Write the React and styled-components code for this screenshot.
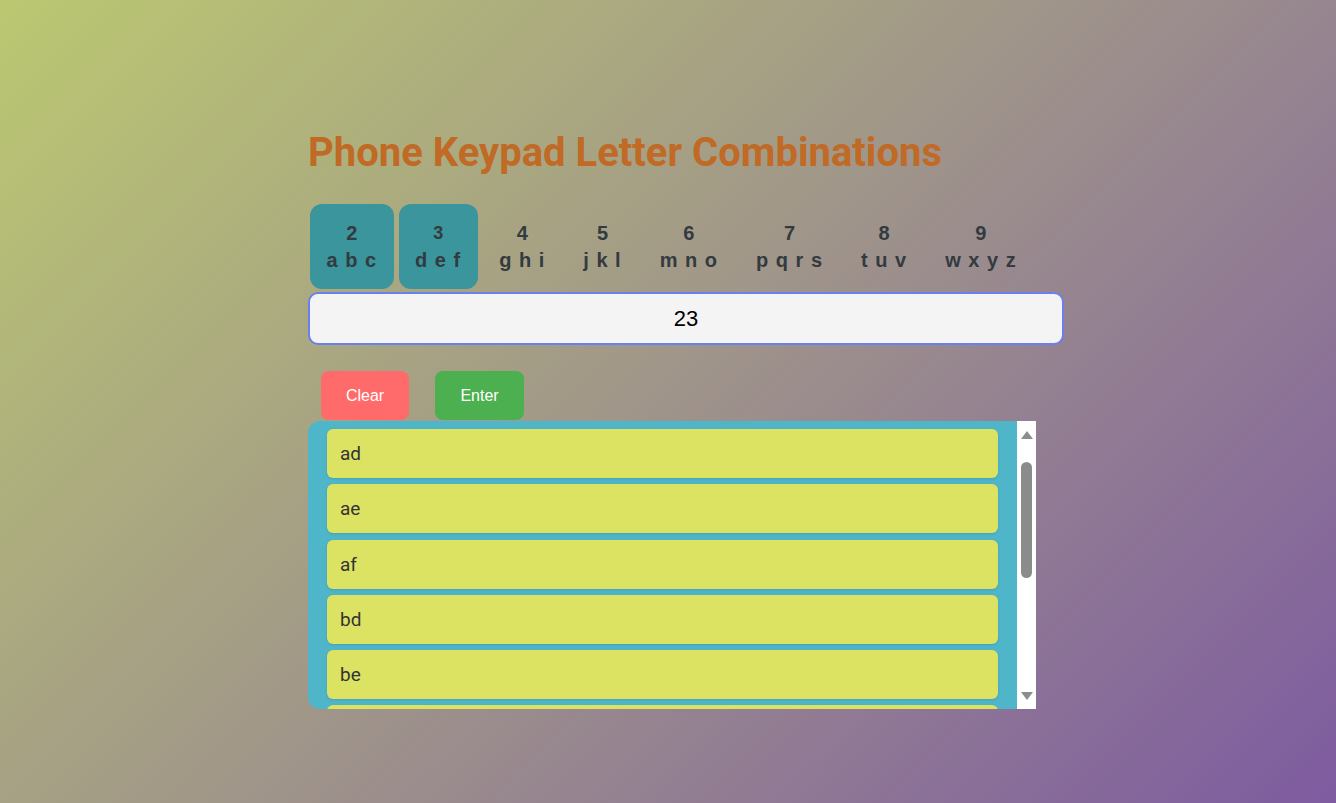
import React from "react";
import styled, { createGlobalStyle } from "styled-components";

const Global = createGlobalStyle`
  html, body { margin: 0; padding: 0; }
  body {
    min-height: 100vh;
    background: linear-gradient(135deg, #bbc871 0%, #9f948a 50%, #7e5ba0 100%);
    font-family: "Liberation Sans", Arial, sans-serif;
  }
`;

const Page = styled.div`
  min-height: 803px;
  display: flex;
  justify-content: center;
  box-sizing: border-box;
  padding-top: 126px;
`;

const Container = styled.div`
  width: 720px;
  display: flex;
  flex-direction: column;
  align-items: flex-start;
`;

const Title = styled.h1`
  margin: 0 0 24px 0;
  font-family: Roboto, "Noto Sans", sans-serif;
  font-weight: 700;
  font-size: 40px;
  line-height: 54px;
  color: #c06a25;
  white-space: nowrap;
`;

const Keypad = styled.div`
  display: flex;
  gap: 5px;
  padding-left: 2px;
`;

const Key = styled.div`
  display: flex;
  flex-direction: column;
  align-items: center;
  justify-content: center;
  height: 85px;
  padding: 0 16.5px;
  border-radius: 12px;
  background: ${(p) => (p.$active ? "#3a959c" : "transparent")};
  color: #333a40;
  font-weight: 700;
  cursor: pointer;
`;

const Digit = styled.span`
  font-size: ${(p) => (p.$small ? "18px" : "20px")};
  line-height: 26px;
`;

const Letters = styled.span`
  font-size: 20px;
  line-height: 28px;
  letter-spacing: 1px;
  white-space: pre;
`;

const Input = styled.input`
  box-sizing: border-box;
  width: 756px;
  height: 53px;
  margin-top: 3px;
  border: 2px solid #6b7fee;
  border-radius: 10px;
  background: #f4f4f4;
  font-family: "Liberation Sans", Arial, sans-serif;
  font-size: 22px;
  color: #000;
  text-align: center;
  outline: none;
`;

const Buttons = styled.div`
  display: flex;
  gap: 26px;
  padding-left: 13px;
  margin-top: 26px;
`;

const Button = styled.button`
  width: ${(p) => p.$w}px;
  height: 49px;
  border: none;
  border-radius: 8px;
  background: ${(p) => p.$bg};
  color: #fff;
  font-family: "Liberation Sans", Arial, sans-serif;
  font-size: 16px;
  cursor: pointer;
`;

const ListBox = styled.div`
  display: flex;
  width: 728px;
  height: 288px;
  margin-top: 1px;
  border-radius: 12px 0 0 12px;
  overflow: hidden;
  background: #4fb6ca;
`;

const ListInner = styled.div`
  flex: 1;
  overflow: hidden;
  padding: 8px 19px 0 19px;
  display: flex;
  flex-direction: column;
  gap: 6.25px;
`;

const Item = styled.div`
  flex-shrink: 0;
  height: 49px;
  display: flex;
  align-items: center;
  padding-left: 13px;
  border-radius: 6px;
  background: #dce363;
  box-shadow: 0 1px 3px rgba(0, 0, 0, 0.12);
  font-family: Roboto, "Noto Sans", sans-serif;
  font-size: 19px;
  color: #333;
`;

const Scrollbar = styled.div`
  width: 19px;
  flex-shrink: 0;
  background: #fff;
  display: flex;
  flex-direction: column;
  align-items: center;
  padding: 10px 0 9px;
  box-sizing: border-box;
`;

const Arrow = styled.div`
  width: 0;
  height: 0;
  border-left: 6px solid transparent;
  border-right: 6px solid transparent;
  ${(p) =>
    p.$down
      ? "border-top: 8px solid #8d8d8d;"
      : "border-bottom: 8px solid #8d8d8d;"}
`;

const Track = styled.div`
  flex: 1;
  width: 100%;
  display: flex;
  justify-content: center;
  padding-top: 23px;
  box-sizing: border-box;
`;

const Thumb = styled.div`
  width: 11px;
  height: 116px;
  border-radius: 6px;
  background: #8b8b8b;
`;

const keys = [
  ["2", "a b c", true],
  ["3", "d e f", true, true],
  ["4", "g h i"],
  ["5", "j k l"],
  ["6", "m n o"],
  ["7", "p q r s"],
  ["8", "t u v"],
  ["9", "w x y z"],
];

const combos = ["ad", "ae", "af", "bd", "be", "bf", "cd", "ce", "cf"];

export default function App() {
  return (
    <>
      <Global />
      <Page>
        <Container>
          <Title>Phone Keypad Letter Combinations</Title>
          <Keypad>
            {keys.map(([d, l, active, small]) => (
              <Key key={d} $active={active}>
                <Digit $small={small}>{d}</Digit>
                <Letters>{l}</Letters>
              </Key>
            ))}
          </Keypad>
          <Input value="23" readOnly />
          <Buttons>
            <Button $bg="#ff6b6b" $w={88}>Clear</Button>
            <Button $bg="#4caf50" $w={89}>Enter</Button>
          </Buttons>
          <ListBox>
            <ListInner>
              {combos.map((c) => (
                <Item key={c}>{c}</Item>
              ))}
            </ListInner>
            <Scrollbar>
              <Arrow />
              <Track>
                <Thumb />
              </Track>
              <Arrow $down />
            </Scrollbar>
          </ListBox>
        </Container>
      </Page>
    </>
  );
}
